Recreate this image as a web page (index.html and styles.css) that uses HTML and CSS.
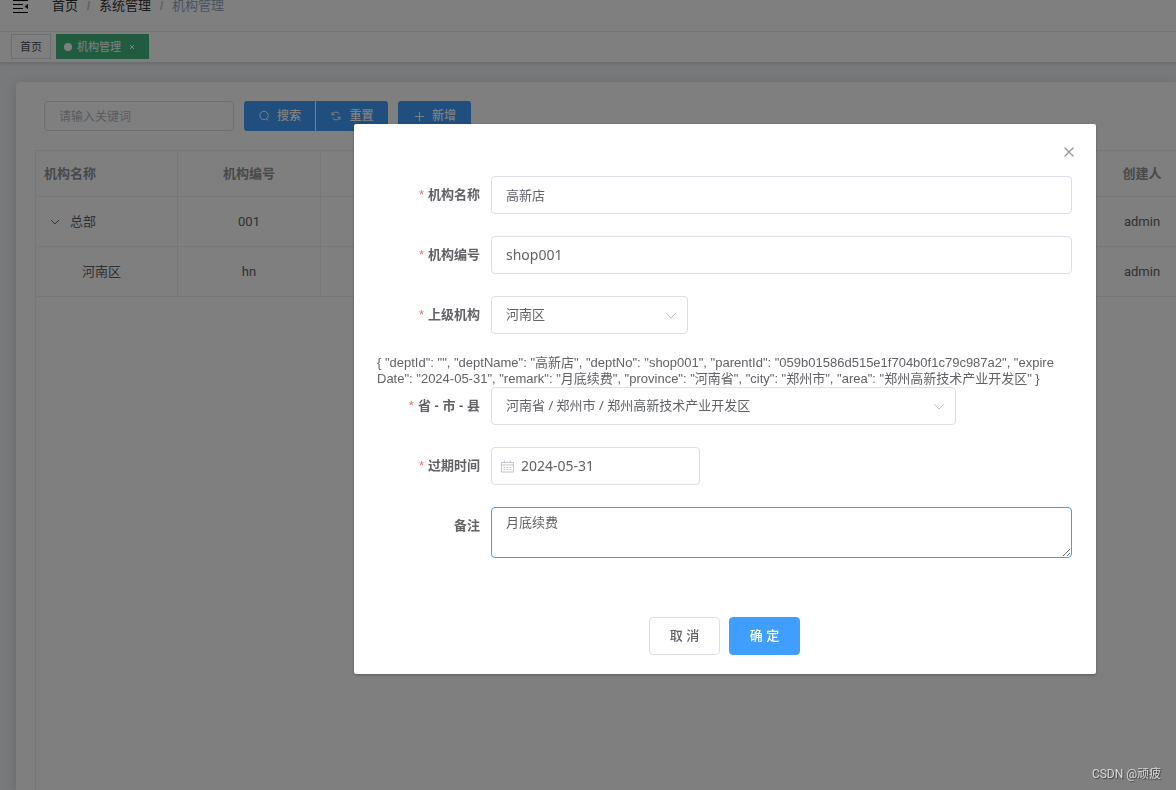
FILE: index.html
```html
<!DOCTYPE html>
<html lang="zh-CN">
<head>
<meta charset="utf-8">
<title>机构管理</title>
<link rel="stylesheet" href="styles.css">
</head>
<body>
<div class="app">
  <header class="navbar">
    <button class="hamburger" type="button" aria-label="折叠菜单">
      <svg width="16" height="14" viewBox="0 0 16 14"><path d="M0 .5h15M0 4.500h10M0 8.500h10M0 12.500h15" stroke="#000"/><path d="M15 4v5l-3.500-2.500z"/></svg>
    </button>
    <nav class="breadcrumb">
      <a href="#">首页</a><span class="sep">/</span><a href="#">系统管理</a><span class="sep">/</span><span class="current">机构管理</span>
    </nav>
  </header>
  <nav class="tags">
    <a class="tag" href="#">首页</a>
    <a class="tag active" href="#"><i class="dot"></i>机构管理<svg width="6" height="6" viewBox="0 0 6 6"><path d="M1 1l4 4M5 1l-4 4" stroke="#fff" fill="none"/></svg></a>
  </nav>
  <main class="main">
    <section class="card">
      <div class="toolbar">
        <input class="search" type="text" placeholder="请输入关键词" aria-label="关键词">
        <div class="button-group">
          <button class="btn-small" type="button"><svg width="12" height="12" viewBox="0 0 12 12"><circle cx="6" cy="5.500" r="4.200"/><path d="M8.500 8.700l1.800 1.800"/></svg>搜索</button>
          <button class="btn-small" type="button"><svg width="12" height="12" viewBox="0 0 12 12"><path d="M2.200 4.800A4 4 0 0 1 9.600 4.300M9.800 7.200A4 4 0 0 1 2.400 7.700M2 2.200v2.600h2.600M10 9.800V7.200H7.400"/></svg>重置</button>
        </div>
        <button class="btn-small" type="button"><svg width="12" height="12" viewBox="0 0 12 12"><path d="M6.500 2v9M2 6.500h9"/></svg>新增</button>
      </div>
      <div class="table-box">
        <table class="table">
          <colgroup><col class="c-name"><col class="c-no"><col><col class="c-user"></colgroup>
          <thead><tr><th class="left">机构名称</th><th>机构编号</th><th></th><th>创建人</th></tr></thead>
          <tbody>
            <tr><td class="left"><span class="node"><svg width="10" height="6" viewBox="0 0 10 6"><path d="M1 1l4 4 4-4" stroke="#666" fill="none"/></svg>总部</span></td><td>001</td><td></td><td>admin</td></tr>
            <tr><td class="left"><span class="child">河南区</span></td><td>hn</td><td></td><td>admin</td></tr>
          </tbody>
        </table>
      </div>
    </section>
  </main>
</div>

<div class="overlay">
  <div class="dialog" role="dialog" aria-modal="true" aria-label="机构">
    <div class="dialog-head">
      <button class="close" type="button" aria-label="关闭"><svg width="10" height="10" viewBox="0 0 10 10"><path d="M.5.5l9 9M9.500.5l-9 9" stroke="#909399" stroke-width="1.200"/></svg></button>
    </div>
    <form class="form">
      <div class="item"><label class="required" for="name">机构名称</label><input class="control" id="name" type="text" value="高新店"></div>
      <div class="item"><label class="required" for="no">机构编号</label><input class="control latin" id="no" type="text" value="shop001"></div>
      <div class="item"><label class="required" for="parent">上级机构</label>
        <div class="field parent"><select class="control" id="parent"><option>河南区</option></select><svg class="chevron" width="12" height="8" viewBox="0 0 12 8"><path d="M1 1l5 5 5-5"/></svg></div></div>
      <div class="debug">{ "deptId": "", "deptName": "高新店", "deptNo": "shop001", "parentId": "059b01586d515e1f704b0f1c79c987a2", "expire<br>Date": "2024-05-31", "remark": "月底续费", "province": "河南省", "city": "郑州市", "area": "郑州高新技术产业开发区" }</div>
      <div class="item"><label class="required" for="area">省 - 市 - 县</label>
        <div class="field area"><select class="control" id="area"><option>河南省 / 郑州市 / 郑州高新技术产业开发区</option></select><svg class="chevron" width="12" height="8" viewBox="0 0 12 8"><path d="M1 1l5 5 5-5"/></svg></div></div>
      <div class="item"><label class="required" for="expire">过期时间</label>
        <div class="field date"><input class="control latin" id="expire" type="text" value="2024-05-31"><svg class="calendar" width="13" height="13" viewBox="0 0 13 13"><path d="M.5 2.500h12v9.500H.5zM.5 5h12M3.500.5v2.500M9.500.5v2.500M2.500 7.500h2M5.500 7.500h2M8.500 7.500h2M2.500 9.500h2M5.500 9.500h2M8.500 9.500h2"/></svg></div></div>
      <div class="item"><label for="remark">备注</label><textarea class="control remark" id="remark">月底续费</textarea></div>
      <div class="actions">
        <button class="btn" type="button">取 消</button>
        <button class="btn primary" type="button">确 定</button>
      </div>
    </form>
  </div>
</div>
<div class="watermark">CSDN @顽疲</div>
</body>
</html>
```
FILE: styles.css
```css
* { box-sizing: border-box; }
body {
  margin: 0;
  overflow: hidden;
  font: 13px/16px "Liberation Sans", "Noto Sans CJK SC", sans-serif;
  color: #606266;
}
a { color: inherit; text-decoration: none; }
button, input, select, textarea { font: inherit; color: inherit; margin: 0; }
button { cursor: pointer; }

.app { height: 100vh; display: flex; flex-direction: column; background: #f0f2f5; }

.navbar {
  height: 32px;
  flex: none;
  display: flex;
  align-items: flex-start;
  gap: 23px;
  padding-left: 13px;
  background: #fff;
  border-bottom: 1px solid #f0f0f0;
}
.hamburger { display: flex; padding: 0; border: 0; background: none; }
.breadcrumb { display: flex; line-height: 12px; color: #303133; }
.breadcrumb .sep { width: 21px; text-align: center; font-weight: bold; color: #c0c4cc; }
.breadcrumb .current { color: #97a8be; }

.tags {
  flex: none;
  display: flex;
  align-items: flex-start;
  gap: 5px;
  height: 31px;
  padding: 2px 0 0 11px;
  background: #fff;
  border-bottom: 1px solid #d8dce5;
  box-shadow: 0 1px 3px rgba(0, 0, 0, .12);
}
.tag {
  display: flex;
  align-items: center;
  height: 25px;
  padding: 0 8px;
  border: 1px solid #d8dce5;
  background: #fff;
  color: #495060;
  font-size: 11px;
}
.tag.active { background: #42b983; border-color: #42b983; color: #fff; padding: 0 13px 0 7px; }
.tag svg { margin-left: 8px; }
.dot { width: 8px; height: 8px; margin: 0 5px 0 0; border-radius: 50%; background: #fff; }

.main { flex: 1; display: flex; min-height: 0; padding: 19px 0 0 16px; }
.card {
  flex: 1;
  min-width: 0;
  display: flex;
  flex-direction: column;
  padding: 19px 0 0 19px;
  overflow: hidden;
  background: #fff;
  border-radius: 4px 0 0 0;
  box-shadow: 0 2px 12px rgba(0, 0, 0, .15);
}
.toolbar { display: flex; gap: 10px; padding-left: 9px; margin-bottom: 19px; }
.search {
  width: 190px;
  height: 30px;
  padding: 2px 14px 0;
  border: 1px solid #dcdfe6;
  border-radius: 4px;
  font-size: 12px;
}
.search::placeholder { color: #b4b8c0; }
.button-group { display: flex; gap: 1px; }
.btn-small {
  display: flex;
  align-items: center;
  justify-content: center;
  gap: 7px;
  width: 73px;
  height: 30px;
  padding: 0;
  border: 0;
  border-radius: 3px;
  background: #409eff;
  color: #fff;
  font-size: 12px;
  font-weight: 500;
}
.button-group .btn-small { width: 72px; }
.button-group .btn-small:first-child { width: 71px; border-radius: 3px 0 0 3px; }
.button-group .btn-small:last-child { border-radius: 0 3px 3px 0; }
.btn-small svg { fill: none; stroke: #fff; }

.table-box { flex: 1; border: solid #ebeef5; border-width: 1px 0 0 1px; }
.table { width: calc(100% + 38px); table-layout: fixed; border-collapse: separate; border-spacing: 0; }
.c-name { width: 142px; }
.c-no, .c-user { width: 143px; }
.table th, .table td {
  height: 50px;
  padding: 0 8px;
  border: solid #ebeef5;
  border-width: 0 1px 1px 0;
  text-align: center;
}
.table th { height: 46px; color: #909399; font-weight: bold; }
.table td { font-family: Roboto, "Noto Sans CJK SC", sans-serif; }
.table th:nth-child(3), .table td:nth-child(3) { border-right: 0; }
.table .left { text-align: left; }
.node { display: flex; align-items: center; gap: 10px; padding-left: 6px; }
.child { padding-left: 38px; }

.overlay {
  position: fixed;
  inset: 0;
  display: flex;
  align-items: flex-start;
  padding: 124px 80px 0 354px;
  background: rgba(0, 0, 0, .5);
}
.dialog {
  flex: 1;
  min-width: 0;
  padding: 0 24px 19px 23px;
  background: #fff;
  border-radius: 2px;
  box-shadow: 0 1px 3px rgba(0, 0, 0, .3);
}
.dialog-head { display: flex; justify-content: flex-end; height: 52px; padding-top: 23px; }
.close { display: flex; align-self: flex-start; margin-right: -2px; padding: 0; border: 0; background: none; }
.form { display: flex; flex-direction: column; }
.item { display: flex; margin-bottom: 22px; }
.item label {
  flex: none;
  width: 114px;
  padding-right: 11px;
  line-height: 38px;
  text-align: right;
  font-weight: bold;
}
.item .required::before { content: "*"; margin-right: 4px; color: #f56c6c; font-weight: normal; }
.control {
  flex: 1;
  width: 100%;
  min-width: 0;
  height: 38px;
  padding: 0 14px 2px;
  border: 1px solid #dcdfe6;
  border-radius: 4px;
  outline: 0;
  background: #fff;
  font-family: "Noto Sans", "Noto Sans CJK SC", sans-serif;
  appearance: none;
}
.latin { font-size: 14px; }
.field { position: relative; display: flex; }
.parent { width: 197px; }
.area { width: 465px; }
.date { width: 209px; }
.date .control { padding-left: 29px; }
.chevron { position: absolute; right: 11px; top: 16px; fill: none; stroke: #c0c4cc; pointer-events: none; }
.calendar { position: absolute; left: 10px; top: 13px; fill: none; stroke: #c0c4cc; }
.debug { margin-top: -1px; white-space: nowrap; line-height: 16px; }
.remark { height: 51px; padding: 5px 14px; border-color: #409eff; line-height: 18px; resize: vertical; }
.actions { display: flex; justify-content: center; gap: 9px; padding-top: 37px; }
.btn {
  width: 71px;
  height: 38px;
  padding: 0;
  border: 1px solid #dcdfe6;
  border-radius: 4px;
  background: #fff;
  font-weight: 500;
}
.btn.primary { background: #409eff; border-color: #409eff; color: #fff; }

.watermark {
  position: fixed;
  right: 15px;
  bottom: 8px;
  color: #d8d8d8;
  font: 12px/16px Roboto, "Noto Sans CJK SC", sans-serif;
  text-shadow: 1px 1px 1px rgba(0, 0, 0, .5);
}
```
